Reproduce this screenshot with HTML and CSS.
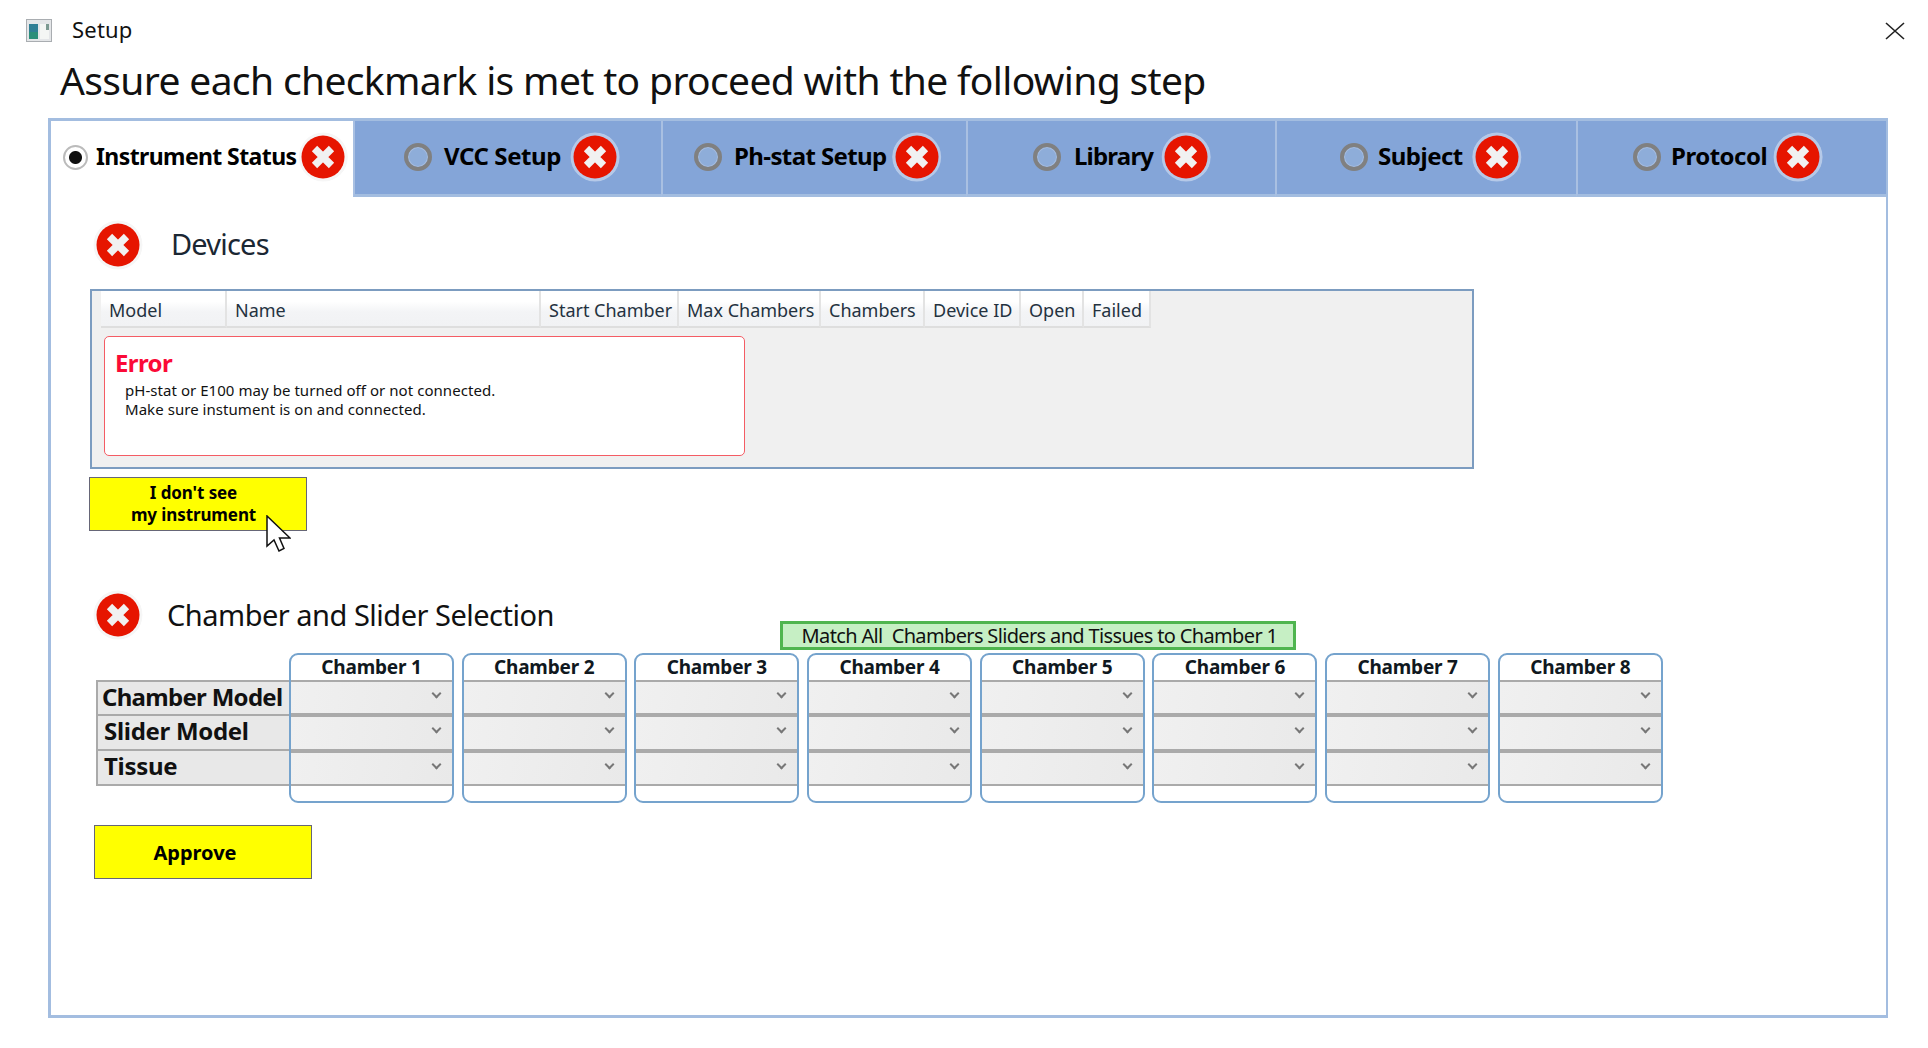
FILE: index.html
```html
<!DOCTYPE html>
<html lang="en">
<head>
<meta charset="utf-8">
<title>Setup</title>
<link rel="stylesheet" href="styles.css">
</head>
<body>
<svg class="defs" width="0" height="0" aria-hidden="true">
  <defs>
    <symbol id="err" viewBox="0 0 50 50">
      <circle cx="25" cy="25" r="21.5" fill="#e61500"/>
      <path d="M16.5 16.5 33.5 33.5M33.5 16.5 16.5 33.5" stroke="#f1f1f1" stroke-width="7.5" fill="none"/>
    </symbol>
  </defs>
</svg>
<div class="window">
  <header class="titlebar">
    <svg class="appicon" viewBox="0 0 26 23" aria-hidden="true">
      <rect x="0.5" y="0.5" width="25" height="22" fill="#e4e6e8" stroke="#a9adb1"/>
      <rect x="3" y="5" width="9" height="15" fill="#2f7f95"/>
      <rect x="3" y="13" width="9" height="7" fill="#2b8f7a"/>
      <rect x="14" y="5" width="9" height="15" fill="#f4f6f4"/>
      <rect x="20" y="5" width="3" height="6" fill="#7c9a92"/>
    </svg>
    <span class="apptitle">Setup</span>
    <svg class="close" viewBox="0 0 20 18" aria-hidden="true"><path d="M1 1 19 17M19 1 1 17" stroke="#222" stroke-width="1.6" fill="none"/></svg>
  </header>
  <h1 class="headline">Assure each checkmark is met to proceed with the following step</h1>

  <main class="panel">
    <nav class="tabs">
      <div class="tab tab-active tab-1"><span class="radio radio-on"></span><span class="tablabel">Instrument Status</span><svg class="erricon"><use href="#err"/></svg></div>
      <div class="tab tab-2"><span class="radio"></span><span class="tablabel">VCC Setup</span><svg class="erricon halo"><use href="#err"/></svg></div>
      <div class="tab tab-3"><span class="radio"></span><span class="tablabel">Ph-stat Setup</span><svg class="erricon halo"><use href="#err"/></svg></div>
      <div class="tab tab-4"><span class="radio"></span><span class="tablabel">Library</span><svg class="erricon halo"><use href="#err"/></svg></div>
      <div class="tab tab-5"><span class="radio"></span><span class="tablabel">Subject</span><svg class="erricon halo"><use href="#err"/></svg></div>
      <div class="tab tab-6"><span class="radio"></span><span class="tablabel">Protocol</span><svg class="erricon halo"><use href="#err"/></svg></div>
    </nav>

    <section class="body">
      <div class="sectionhead devices-head">
        <svg class="erricon"><use href="#err"/></svg>
        <h2 class="devices-title">Devices</h2>
      </div>

      <div class="grid">
        <div class="gridhead">
          <span class="col col-model">Model</span>
          <span class="col col-name">Name</span>
          <span class="col col-start">Start Chamber</span>
          <span class="col col-max">Max Chambers</span>
          <span class="col col-chambers">Chambers</span>
          <span class="col col-id">Device ID</span>
          <span class="col col-open">Open</span>
          <span class="col col-failed">Failed</span>
        </div>
        <div class="errorbox">
          <div class="errortitle">Error</div>
          <p class="errortext">pH-stat or E100 may be turned off or not connected.<br>Make sure instument is on and connected.</p>
        </div>
      </div>

      <div class="seewrap">
        <button class="yellow see">I don't see<br>my instrument</button>
        <svg class="cursor" viewBox="0 0 25 37" aria-hidden="true"><path d="M1 1V31L8 25 13 36 18 33.500 13.500 23H24Z" fill="#fff" stroke="#111" stroke-width="1.500" stroke-linejoin="miter"/></svg>
      </div>

      <div class="sectionhead chamber-head">
        <svg class="erricon"><use href="#err"/></svg>
        <h2 class="chamber-title">Chamber and Slider Selection</h2>
        <button class="match">Match All  Chambers Sliders and Tissues to Chamber 1</button>
      </div>

      <div class="matrix">
        <div class="rowlabels">
          <div class="rowlabel rowlabel-a">Chamber Model</div>
          <div class="rowlabel rowlabel-b">Slider Model</div>
          <div class="rowlabel rowlabel-b">Tissue</div>
        </div>
        <div class="chambers">
          <div class="chamber"><div class="chambername">Chamber 1</div><div class="select"><i class="chev"></i></div><div class="select"><i class="chev"></i></div><div class="select"><i class="chev"></i></div></div>
          <div class="chamber"><div class="chambername">Chamber 2</div><div class="select"><i class="chev"></i></div><div class="select"><i class="chev"></i></div><div class="select"><i class="chev"></i></div></div>
          <div class="chamber"><div class="chambername">Chamber 3</div><div class="select"><i class="chev"></i></div><div class="select"><i class="chev"></i></div><div class="select"><i class="chev"></i></div></div>
          <div class="chamber"><div class="chambername">Chamber 4</div><div class="select"><i class="chev"></i></div><div class="select"><i class="chev"></i></div><div class="select"><i class="chev"></i></div></div>
          <div class="chamber"><div class="chambername">Chamber 5</div><div class="select"><i class="chev"></i></div><div class="select"><i class="chev"></i></div><div class="select"><i class="chev"></i></div></div>
          <div class="chamber"><div class="chambername">Chamber 6</div><div class="select"><i class="chev"></i></div><div class="select"><i class="chev"></i></div><div class="select"><i class="chev"></i></div></div>
          <div class="chamber"><div class="chambername">Chamber 7</div><div class="select"><i class="chev"></i></div><div class="select"><i class="chev"></i></div><div class="select"><i class="chev"></i></div></div>
          <div class="chamber"><div class="chambername">Chamber 8</div><div class="select"><i class="chev"></i></div><div class="select"><i class="chev"></i></div><div class="select"><i class="chev"></i></div></div>
        </div>
      </div>

      <button class="yellow approve">Approve</button>
    </section>
  </main>
</div>
</body>
</html>
```
FILE: styles.css
```css
* { box-sizing: border-box; }
html, body { margin: 0; height: 100%; background: #fff; }
body { font-family: "Noto Sans", "Open Sans", sans-serif; color: #000; overflow: hidden; }
.defs { display: block; height: 0; }
.window { width: 1928px; height: 1048px; display: flex; flex-direction: column; }

.titlebar { height: 50px; padding: 11px 23px 0 26px; display: flex; align-items: center; }
.appicon { width: 26px; height: 23px; }
.apptitle { margin: -4px 0 0 20px; font-size: 22px; letter-spacing: 0.2px; color: #111; }
.close { width: 20px; height: 18px; margin-left: auto; }

.headline { margin: 0; height: 68px; padding: 0 0 6px 60px; font-size: 39px; line-height: 60px; font-weight: 400; letter-spacing: -0.65px; color: #111; white-space: nowrap; }

.panel { width: 1840px; height: 900px; margin-left: 48px; display: flex; flex-direction: column; }

.tabs { display: grid; grid-template-columns: 305px 308px 305px 309px 301px 312px; height: 79px; border-top: 3px solid #a3bde0; }
.tab { display: flex; align-items: center; gap: 13px; background: #84a5d8; border-left: 2px solid #a9c0e2; border-bottom: 3px solid #a3bde0; padding-bottom: 1px; }
.tab:last-child { border-right: 2px solid #a3bde0; }
.tab-active { background: #fff; border-left: 3px solid #a3bde0; border-bottom: 0; padding-bottom: 4px; }
.tab-1 { padding-left: 12px; gap: 8px; }
.tab-2 { padding-left: 49px; gap: 12px; }
.tab-3 { padding-left: 31px; gap: 12px; }
.tab-4 { padding-left: 65px; }
.tab-5 { padding-left: 63px; gap: 10px; }
.tab-6 { padding-left: 55px; gap: 10px; }
.tablabel { margin-top: -3px; font-size: 24px; font-weight: 700; letter-spacing: -0.4px; white-space: nowrap; }
.tab-1 .tablabel { margin-top: -2px; font-size: 23px; letter-spacing: -0.6px; }
.tab-3 .tablabel { letter-spacing: -0.6px; }
.tab-4 .tablabel { letter-spacing: -0.8px; }
.tab-5 .tablabel, .tab-6 .tablabel { letter-spacing: -0.5px; }

.radio { width: 28px; height: 28px; border-radius: 50%; border: 4px solid #808080; background: #8eadd9; flex: none; box-shadow: inset 0 0 0 1px #a6bde0; }
.radio-on { width: 25px; height: 25px; border: 2px solid #bbb; background: radial-gradient(circle, #111 0 6px, #fff 7px); box-shadow: none; }

.erricon { width: 50px; height: 50px; flex: none; margin: 0 -3px; border-radius: 50%; background: #f6f6f6; clip-path: circle(24.500px); }
.erricon.halo { background: #b5c9e8; }
.tab-1 .erricon { margin-left: -6px; }
.tab-3 .erricon { margin-left: -7px; }
.tab-4 .erricon { margin-left: -5px; }
.tab-5 .erricon { margin-left: -1px; }
.tab-6 .erricon { margin-left: -4px; }

.body { flex: 1; border-left: 3px solid #a3bde0; border-right: 2px solid #a3bde0; border-bottom: 3px solid #a3bde0; padding: 26px 0 0 45px; display: flex; flex-direction: column; align-items: flex-start; }

.sectionhead { display: flex; align-items: center; height: 44px; }
.devices-title { margin: -3px 0 0 31px; font-size: 29px; font-weight: 400; letter-spacing: -0.8px; color: #1b2733; }
.chamber-title { margin: -2px 0 0 27px; font-size: 29px; font-weight: 400; letter-spacing: -0.5px; color: #111; white-space: nowrap; }

.grid { margin: 22px 0 0 -6px; width: 1384px; height: 180px; background: #f0f0f0; border: 2px solid #7c9cc0; padding-left: 9px; }
.gridhead { display: flex; height: 37px; }
.col { height: 37px; padding: 4px 0 0 8px; font-size: 18px; line-height: 30px; color: #24323f; background: linear-gradient(#fff 0 30%, #f3f4f6 60%, #f1f2f4); border-right: 2px solid #e3e3e3; border-bottom: 2px solid #dedede; white-space: nowrap; }
.col-model { width: 126px; }
.col-name { width: 314px; }
.col-start { width: 138px; }
.col-max { width: 142px; }
.col-chambers { width: 104px; }
.col-id { width: 96px; }
.col-open { width: 63px; }
.col-failed { width: 67px; }

.errorbox { width: 641px; height: 120px; margin: 8px 0 0 3px; background: #fff; border: 1.500px solid #f45c64; border-radius: 5px; padding: 9px 0 0 10px; }
.errortitle { font-size: 24px; line-height: 34px; font-weight: 700; color: #fb0a37; letter-spacing: -0.6px; }
.errortext { margin: 1px 0 0 10px; font-size: 15px; line-height: 19px; letter-spacing: 0.05px; color: #111; white-space: nowrap; }

.seewrap { position: relative; margin: 8px 0 0 -7px; }
.yellow { display: block; background: #ff0; border: 1px solid #667; font-family: inherit; font-weight: 700; color: #000; padding: 0; }
.see { width: 218px; height: 54px; padding-right: 9px; font-size: 17px; line-height: 22px; letter-spacing: -0.1px; }
.cursor { position: absolute; left: 177px; top: 38px; width: 25px; height: 37px; }

.chamber-head { margin-top: 62px; }
.match { align-self: flex-end; margin: 0 0 -13px 226px; width: 516px; height: 29px; padding: 0 0 0 3px; background: #c6efc4; border: 3px solid #4fb54f; font-family: inherit; font-size: 20px; line-height: 22px; letter-spacing: -0.65px; color: #111; white-space: pre; }

.matrix { display: flex; margin: 16px 0 0 0; }
.rowlabels { width: 193px; padding-top: 27px; flex: none; }
.rowlabel { height: 36px; padding-left: 4px; background: #e8e8e8; border: 2px solid #aaa; border-right: 0; font-size: 24px; line-height: 30px; font-weight: 700; color: #111; white-space: nowrap; }
.rowlabel-a { letter-spacing: -0.7px; }
.rowlabel-b { height: 35px; border-top: 0; padding-left: 6px; letter-spacing: -0.3px; }
.chambers { display: grid; grid-template-columns: repeat(8, 165px); column-gap: 7.700px; }
.chamber { height: 150px; border: 2px solid #75a3cd; border-radius: 9px; background: #fff; overflow: hidden; }
.chambername { height: 25px; font-size: 19px; line-height: 25px; font-weight: 700; text-align: center; letter-spacing: -0.2px; color: #101820; }
.select { height: 35.300px; background: linear-gradient(100deg, #f0f0f0, #e9e9e9); border-top: 2px solid #aaa; border-bottom: 2px solid #aaa; display: flex; align-items: flex-start; justify-content: flex-end; padding: 8px 12px 0 0; }
.chev { display: block; width: 7px; height: 7px; border-right: 2px solid #777; border-bottom: 2px solid #777; transform: rotate(45deg); }

.approve { width: 218px; height: 54px; margin: 22px 0 0 -2px; padding-right: 16px; font-size: 20px; }
```
